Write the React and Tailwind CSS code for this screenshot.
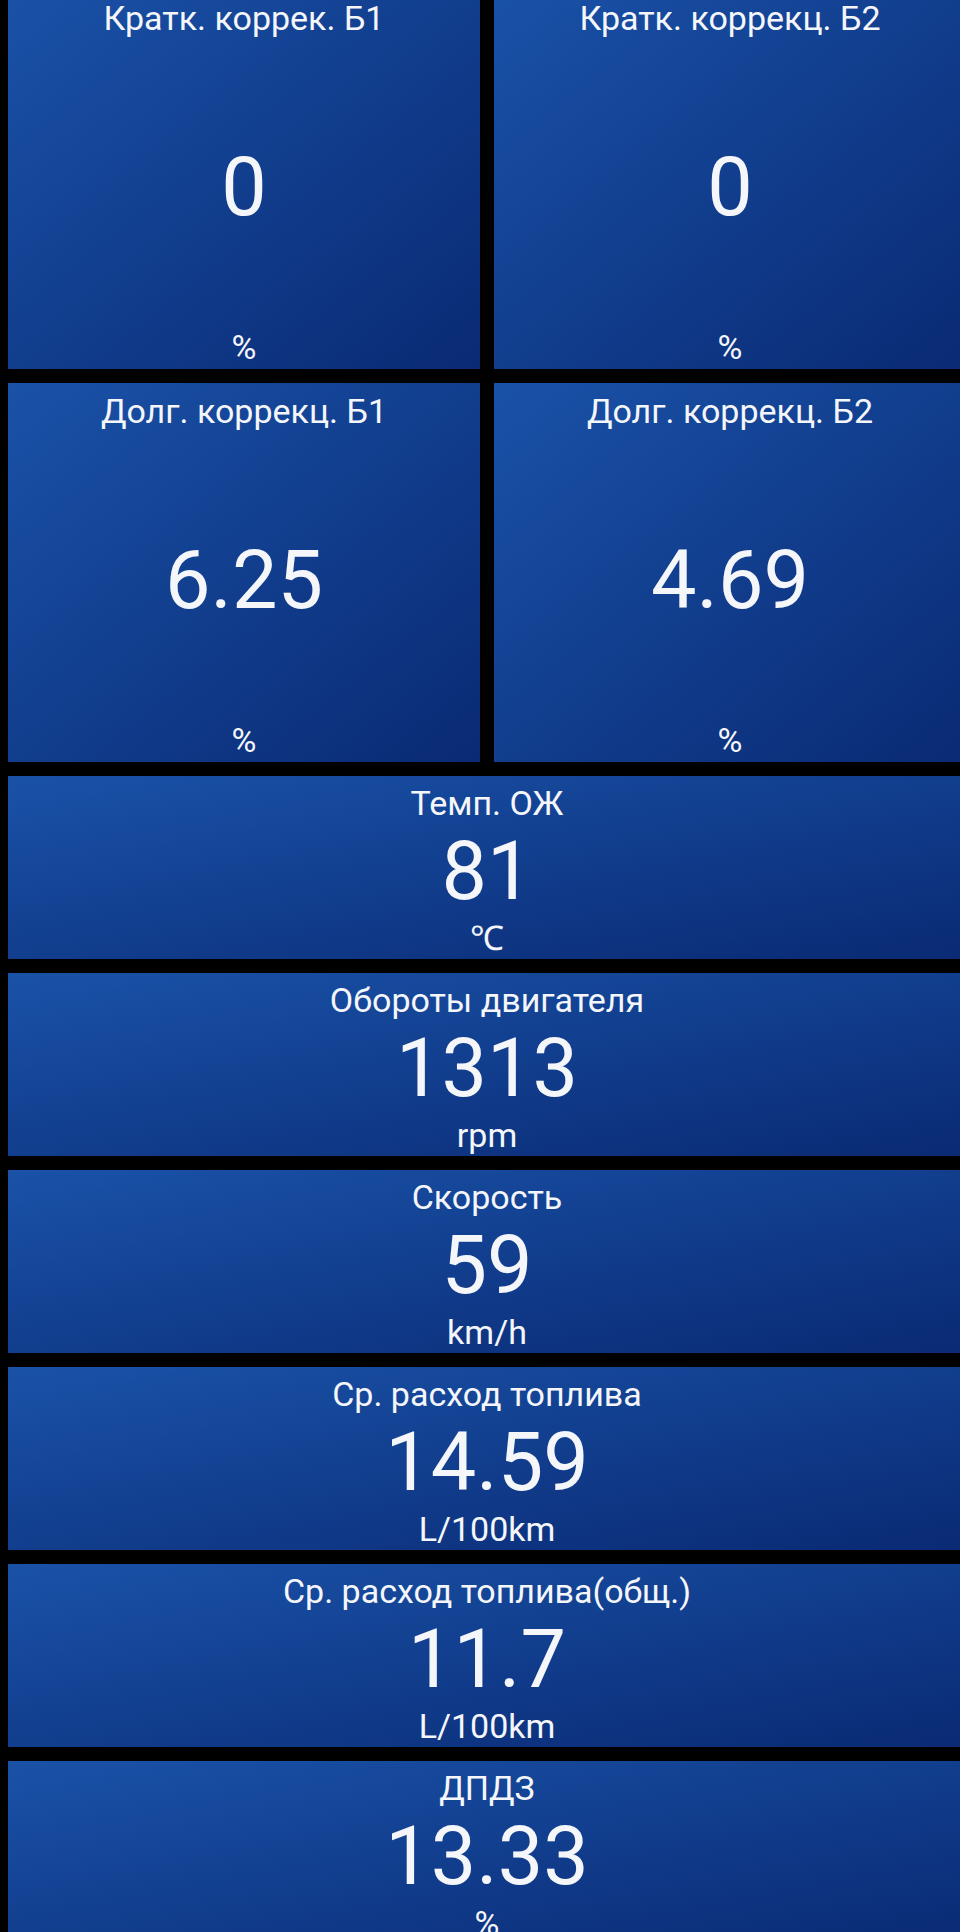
import React from "react";

const tiles = [
  [
    { t: "Кратк. коррек. Б1", v: "0", u: "%" },
    { t: "Кратк. коррекц. Б2", v: "0", u: "%" },
  ],
  [
    { t: "Долг. коррекц. Б1", v: "6.25", u: "%" },
    { t: "Долг. коррекц. Б2", v: "4.69", u: "%" },
  ],
];

const rows = [
  { t: "Темп. ОЖ", v: "81", u: "℃" },
  { t: "Обороты двигателя", v: "1313", u: "rpm" },
  { t: "Скорость", v: "59", u: "km/h" },
  { t: "Ср. расход топлива", v: "14.59", u: "L/100km" },
  { t: "Ср. расход топлива(общ.)", v: "11.7", u: "L/100km" },
  { t: "ДПДЗ", v: "13.33", u: "%" },
];

function Tile({ t, v, u }) {
  return (
    <div className="flex h-[379px] flex-col items-center bg-linear-to-br from-[#1a52a8] to-[#0a2a74] pt-[8px] pb-[2px] text-[#f4f6fa]">
      <div className="text-[34px] leading-[40px]">{t}</div>
      <div className="flex flex-1 items-center justify-center pt-[10px] text-[81px] leading-[92px]">{v}</div>
      <div className="text-[34px] leading-[40px]">{u}</div>
    </div>
  );
}

function Row({ t, v, u }) {
  return (
    <div className="flex h-[183px] flex-col items-center bg-linear-to-br from-[#1a52a8] to-[#0a2a74] pt-[7px] text-[#f4f6fa]">
      <div className="text-[34px] leading-[40px]">{t}</div>
      <div className="mt-[3px] text-[81px] leading-[92px]">{v}</div>
      <div className="text-[34px] leading-[40px]">{u}</div>
    </div>
  );
}

export default function App() {
  return (
    <div
      className="h-[1932px] w-[960px] overflow-hidden bg-black"
      style={{ fontFamily: "Roboto, 'Noto Sans', sans-serif" }}
    >
      <div className="mt-[-10px] ml-[8px] flex w-[958px] flex-col gap-[14px]">
        {tiles.map((pair, i) => (
          <div key={i} className="grid grid-cols-2 gap-[14px]">
            {pair.map((x) => (
              <Tile key={x.t} {...x} />
            ))}
          </div>
        ))}
        {rows.map((x) => (
          <Row key={x.t} {...x} />
        ))}
      </div>
    </div>
  );
}
